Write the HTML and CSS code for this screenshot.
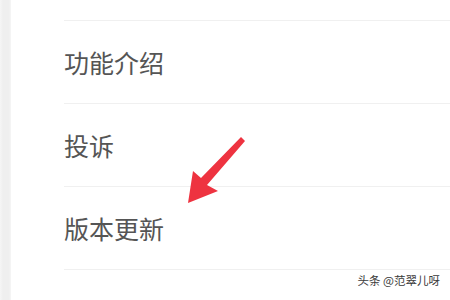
FILE: index.html
```html
<!DOCTYPE html>
<html lang="zh">
<head>
<meta charset="utf-8">
<link rel="stylesheet" href="styles.css">
</head>
<body>
<div class="page">
  <div class="strip"></div>
  <div class="main">
    <ul class="menu">
      <li class="item">功能介绍</li>
      <li class="item">投诉</li>
      <li class="item">版本更新</li>
    </ul>
  </div>
  <svg class="arrow" width="450" height="300" viewBox="0 0 450 300">
    <polygon points="188,203 193,171 201,178 241,137 245,141 207,185 218,191" fill="#ee3340"/>
  </svg>
  <div class="watermark">头条 @范翠儿呀</div>
</div>
</body>
</html>
```
FILE: styles.css
```css
html, body {
  margin: 0;
  padding: 0;
  background: #ffffff;
}
.page {
  position: relative;
  width: 450px;
  height: 300px;
  overflow: hidden;
  display: flex;
  font-family: "Noto Sans CJK SC", "Noto Sans", sans-serif;
}
.strip {
  width: 11px;
  flex: none;
  background: linear-gradient(to right, #f6f6f6 0, #efefef 3px, #efefef 9px, #f6f6f6 11px);
}
.main {
  flex: 1;
  padding-top: 20px;
  padding-left: 53px;
}
.menu {
  list-style: none;
  margin: 0;
  padding: 0;
}
.item {
  height: 82px;
  border-top: 1px solid #f0f0f0;
  display: flex;
  align-items: center;
  font-size: 25px;
  color: #555555;
  letter-spacing: 0;
}
.item:last-child {
  border-bottom: 1px solid #f0f0f0;
}
.arrow {
  position: absolute;
  left: 0;
  top: 0;
  pointer-events: none;
}
.watermark {
  position: absolute;
  right: 10px;
  top: 272px;
  font-size: 11.5px;
  color: #3a3a3a;
  line-height: 16px;
  white-space: nowrap;
}
```
